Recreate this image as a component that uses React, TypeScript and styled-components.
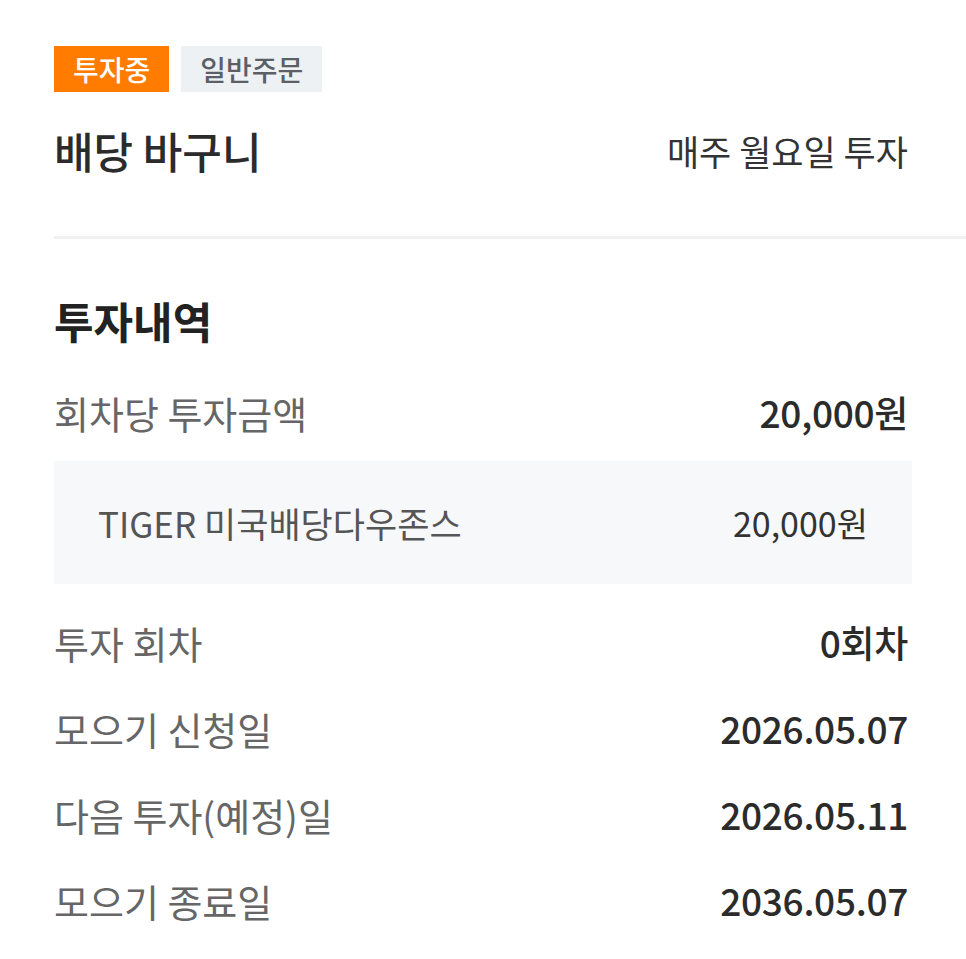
import React from 'react';
import styled, { createGlobalStyle } from 'styled-components';

const GlobalStyle = createGlobalStyle`
  html, body {
    margin: 0;
    padding: 0;
    background: #ffffff;
  }
  body {
    font-family: "Noto Sans CJK KR", "Noto Sans", sans-serif;
    color: #333333;
  }
`;

const Page = styled.div`
  width: 966px;
  height: 959px;
  box-sizing: border-box;
  padding: 46px 58px 0 54px;
  overflow: hidden;
`;

const Badges = styled.div`
  display: flex;
  gap: 12px;
`;

const Badge = styled.span<{ $active?: boolean }>`
  display: inline-flex;
  align-items: center;
  justify-content: center;
  height: 46px;
  padding: 0 19px;
  font-size: 28px;
  font-weight: 500;
  background: ${(p) => (p.$active ? '#ff7c00' : '#eef1f4')};
  color: ${(p) => (p.$active ? '#ffffff' : '#5b5f66')};
`;

const TitleRow = styled.div`
  display: flex;
  align-items: center;
  justify-content: space-between;
  margin-top: 30px;
  height: 56px;
`;

const Title = styled.h1`
  margin: 0;
  font-size: 43px;
  font-weight: 500;
  color: #2b2b2b;
`;

const Schedule = styled.span`
  font-size: 35px;
  color: #333333;
`;

const Divider = styled.hr`
  margin: 58px -58px 0 0;
  border: none;
  height: 3px;
  background: #f0f0f0;
`;

const SectionTitle = styled.h2`
  margin: 53px 0 0;
  height: 56px;
  line-height: 56px;
  font-size: 43px;
  font-weight: 700;
  color: #222222;
`;

const Row = styled.div`
  display: flex;
  align-items: center;
  justify-content: space-between;
  height: 86px;
`;

const FirstRow = styled(Row)`
  margin-top: 21px;
`;

const Label = styled.span`
  font-size: 38px;
  color: #666666;
`;

const Value = styled.span`
  font-size: 37px;
  font-weight: 500;
  color: #2b2b2b;
  letter-spacing: -0.3px;
`;

const Breakdown = styled.div`
  display: flex;
  align-items: center;
  justify-content: space-between;
  height: 123px;
  margin: 6px -4px 15px 0;
  padding: 0 44px;
  background: #f7f8fa;
`;

const ItemName = styled.span`
  font-size: 35px;
  color: #555555;
`;

const ItemValue = styled.span`
  font-size: 34px;
  color: #333333;
`;

const rows = [
  { label: '투자 회차', value: '0회차' },
  { label: '모으기 신청일', value: '2026.05.07' },
  { label: '다음 투자(예정)일', value: '2026.05.11' },
  { label: '모으기 종료일', value: '2036.05.07' },
];

const App: React.FC = () => (
  <>
    <GlobalStyle />
    <Page>
      <Badges>
        <Badge $active>투자중</Badge>
        <Badge>일반주문</Badge>
      </Badges>
      <TitleRow>
        <Title>배당 바구니</Title>
        <Schedule>매주 월요일 투자</Schedule>
      </TitleRow>
      <Divider />
      <SectionTitle>투자내역</SectionTitle>
      <FirstRow>
        <Label>회차당 투자금액</Label>
        <Value>20,000원</Value>
      </FirstRow>
      <Breakdown>
        <ItemName>TIGER 미국배당다우존스</ItemName>
        <ItemValue>20,000원</ItemValue>
      </Breakdown>
      {rows.map((r) => (
        <Row key={r.label}>
          <Label>{r.label}</Label>
          <Value>{r.value}</Value>
        </Row>
      ))}
    </Page>
  </>
);

export default App;
